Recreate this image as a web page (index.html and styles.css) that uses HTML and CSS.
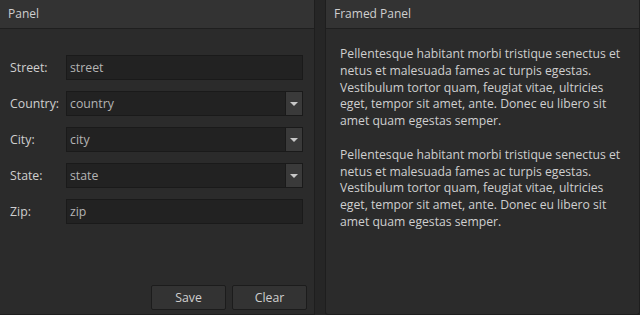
FILE: index.html
```html
<!DOCTYPE html>
<html>
<head>
<meta charset="utf-8">
<link rel="stylesheet" href="styles.css">
</head>
<body>
<div class="app">
  <section class="panel">
    <div class="panel-header">Panel</div>
    <div class="panel-body form-body">
      <div class="form">
        <div class="row"><label>Street:</label><div class="input">street</div></div>
        <div class="row"><label>Country:</label><div class="input select">country<span class="drop"><span class="tri"></span></span></div></div>
        <div class="row"><label>City:</label><div class="input select">city<span class="drop"><span class="tri"></span></span></div></div>
        <div class="row"><label>State:</label><div class="input select">state<span class="drop"><span class="tri"></span></span></div></div>
        <div class="row"><label>Zip:</label><div class="input">zip</div></div>
      </div>
      <div class="buttons">
        <button class="btn">Save</button>
        <button class="btn">Clear</button>
      </div>
    </div>
  </section>
  <section class="panel framed">
    <div class="panel-header">Framed Panel</div>
    <div class="panel-body text-body">
      <p>Pellentesque habitant morbi tristique senectus et netus et malesuada fames ac turpis egestas. Vestibulum tortor quam, feugiat vitae, ultricies eget, tempor sit amet, ante. Donec eu libero sit amet quam egestas semper.</p>
      <p>Pellentesque habitant morbi tristique senectus et netus et malesuada fames ac turpis egestas. Vestibulum tortor quam, feugiat vitae, ultricies eget, tempor sit amet, ante. Donec eu libero sit amet quam egestas semper.</p>
    </div>
  </section>
</div>
</body>
</html>
```
FILE: styles.css
```css
html, body {
  margin: 0;
  padding: 0;
  background: #262626;
}
body {
  font-family: "Open Sans", "Noto Sans", sans-serif;
  font-size: 12px;
  color: #cfcfcf;
}
.app {
  display: flex;
  gap: 10px;
  width: 640px;
  height: 315px;
}
.panel {
  width: 315px;
  height: 315px;
  box-sizing: border-box;
  display: flex;
  flex-direction: column;
  background: #2b2b2b;
  border-right: 1px solid #1e1e1e;
  border-bottom: 1px solid #1e1e1e;
}
.panel.framed {
  border: 1px solid #1e1e1e;
  border-top: none;
  border-radius: 0 0 3px 3px;
}
.panel-header {
  height: 29px;
  box-sizing: border-box;
  background: #333333;
  border-bottom: 1px solid #1f1f1f;
  padding: 0 8px;
  line-height: 28px;
  font-size: 12px;
}
.panel-body {
  flex: 1;
}
.form-body {
  display: flex;
  flex-direction: column;
  padding: 26px 10px 4px 10px;
}
.form {
  display: flex;
  flex-direction: column;
  gap: 11px;
}
.row {
  display: flex;
  align-items: center;
  height: 25px;
}
.row label {
  width: 56px;
  font-size: 12.3px;
}
.input {
  flex: 1;
  margin-right: 1px;
  height: 25px;
  box-sizing: border-box;
  background: #222222;
  border: 1px solid #1a1a1a;
  padding: 0 3px;
  line-height: 23px;
  color: #b4b4b4;
  font-size: 12.3px;
  position: relative;
}
.drop {
  position: absolute;
  right: -1px;
  top: -1px;
  width: 18px;
  height: 25px;
  box-sizing: border-box;
  background: #3a3a3a;
  border: 1px solid #1a1a1a;
  display: flex;
  align-items: center;
  justify-content: center;
}
.tri {
  width: 0;
  height: 0;
  border-left: 4.5px solid transparent;
  border-right: 4.5px solid transparent;
  border-top: 4px solid #c8c8c8;
}
.buttons {
  margin-top: auto;
  margin-right: -3px;
  display: flex;
  justify-content: flex-end;
  gap: 6px;
}
.btn {
  width: 75px;
  height: 25px;
  background: #333333;
  border: 1px solid #1c1c1c;
  border-radius: 2px;
  color: #cfcfcf;
  font-family: inherit;
  font-size: 12.3px;
  padding: 0;
}
.text-body {
  padding: 17px 14px 0 14px;
}
.text-body p {
  margin: 0 0 17px 0;
  line-height: 16.75px;
  font-size: 12.2px;
}
```
